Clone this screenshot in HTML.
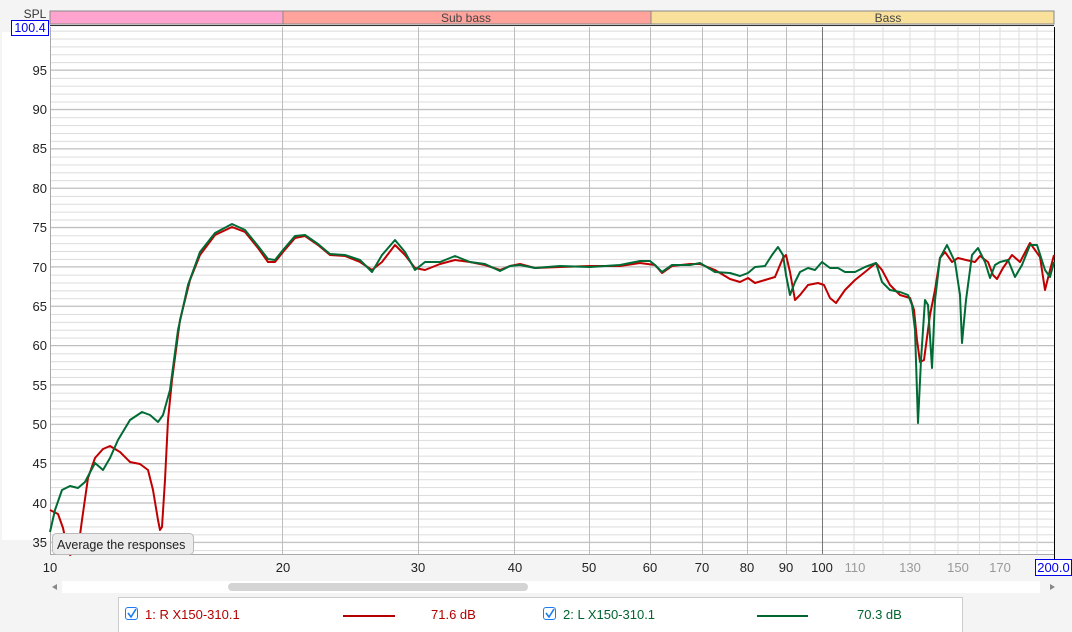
<!DOCTYPE html>
<html><head><meta charset="utf-8"><style>
html,body{margin:0;padding:0;background:#f4f4f4;width:1072px;height:632px;overflow:hidden;font-family:"Liberation Sans",sans-serif}
svg{display:block}
</style></head><body>
<svg width="1072" height="632" xmlns="http://www.w3.org/2000/svg" font-family="Liberation Sans, sans-serif">
<defs>
<pattern id="hm" x="0" y="70" width="10" height="7.87" patternUnits="userSpaceOnUse">
<line x1="0" y1="0.5" x2="10" y2="0.5" stroke="#dcdcdc" stroke-width="1"/>
</pattern>
</defs>
<rect x="0" y="0" width="1072" height="632" fill="#f4f4f4"/>
<rect x="2" y="32" width="48" height="508" fill="#fff"/>
<!-- bands -->
<rect x="50" y="11" width="233" height="13" fill="#ffa3cf" stroke="#888" stroke-width="1"/>
<rect x="283" y="11" width="368" height="13" fill="#ffa39c" stroke="#888" stroke-width="1"/>
<rect x="651" y="11" width="403" height="13" fill="#f9e19b" stroke="#888" stroke-width="1"/>
<text x="466" y="22" font-size="12" fill="#444" text-anchor="middle">Sub bass</text>
<text x="888" y="22" font-size="12" fill="#444" text-anchor="middle">Bass</text>
<text x="35" y="18" font-size="12" fill="#333" text-anchor="middle">SPL</text>
<!-- plot -->
<rect x="50" y="27" width="1004" height="527" fill="#fff"/>
<rect x="50" y="27" width="1004" height="527" fill="url(#hm)"/>
<g stroke="#bdbdbd" stroke-width="1">
<line x1="50" x2="1054" y1="70" y2="70"/><line x1="50" x2="1054" y1="109.4" y2="109.4"/><line x1="50" x2="1054" y1="148.7" y2="148.7"/><line x1="50" x2="1054" y1="188.1" y2="188.1"/><line x1="50" x2="1054" y1="227.4" y2="227.4"/><line x1="50" x2="1054" y1="266.8" y2="266.8"/><line x1="50" x2="1054" y1="306.1" y2="306.1"/><line x1="50" x2="1054" y1="345.5" y2="345.5"/><line x1="50" x2="1054" y1="384.8" y2="384.8"/><line x1="50" x2="1054" y1="424.2" y2="424.2"/><line x1="50" x2="1054" y1="463.5" y2="463.5"/><line x1="50" x2="1054" y1="502.9" y2="502.9"/><line x1="50" x2="1054" y1="542.2" y2="542.2"/>
</g>
<g stroke="#bdbdbd" stroke-width="1">
<line x1="282.5" x2="282.5" y1="27" y2="554"/><line x1="418.5" x2="418.5" y1="27" y2="554"/><line x1="514.5" x2="514.5" y1="27" y2="554"/><line x1="589.5" x2="589.5" y1="27" y2="554"/><line x1="650.5" x2="650.5" y1="27" y2="554"/><line x1="702.5" x2="702.5" y1="27" y2="554"/><line x1="747.5" x2="747.5" y1="27" y2="554"/><line x1="786.5" x2="786.5" y1="27" y2="554"/>
</g>
<line x1="822.5" x2="822.5" y1="27" y2="554" stroke="#777"/>
<g stroke="#dedede" stroke-width="1">
<line x1="854" x2="854" y1="27" y2="554"/><line x1="883" x2="883" y1="27" y2="554"/><line x1="910" x2="910" y1="27" y2="554"/><line x1="935" x2="935" y1="27" y2="554"/><line x1="958" x2="958" y1="27" y2="554"/><line x1="979.5" x2="979.5" y1="27" y2="554"/><line x1="1000" x2="1000" y1="27" y2="554"/><line x1="1019" x2="1019" y1="27" y2="554"/><line x1="1037" x2="1037" y1="27" y2="554"/>
</g>
<line x1="50" x2="1054" y1="25.5" y2="25.5" stroke="#333"/>
<line x1="50.5" x2="50.5" y1="27" y2="555" stroke="#aaa"/>
<line x1="50" x2="1054" y1="554.5" y2="554.5" stroke="#aaa"/>
<line x1="1054.5" x2="1054.5" y1="27" y2="560" stroke="#000"/>
<!-- curves -->
<polyline fill="none" stroke="#c00000" stroke-width="2" stroke-linejoin="round" points="50,510 58,514 63,528 66,542 70,555 78,550 82,520 88,478 95,458 103,449 110,446 120,452 130,462 140,464 148,470 153,490 158,520 160,530 162,527 165,480 168,420 172,380 180,320 190,280 200,255 215,235 232,227 245,232 258,248 268,262 275,262 283,252 295,238 305,236 318,245 330,255 345,256 360,262 372,270 382,262 395,245 405,255 415,268 425,270 440,264 455,260 470,262 485,265 500,270 510,266 520,264 535,268 560,267 590,266 620,266 640,263 655,265 662,273 672,266 690,264 700,264 715,270 730,279 740,282 748,278 755,283 765,280 775,277 780,265 783,258 786,255 790,272 795,300 800,295 808,285 818,283 824,285 830,298 836,303 845,290 855,280 865,272 876,263 882,270 890,285 900,295 910,298 914,310 917,340 920,362 924,360 930,315 935,290 940,258 945,252 952,262 958,258 966,260 975,262 980,256 988,262 993,275 997,279 1003,268 1012,255 1020,262 1030,243 1040,257 1045,290 1050,270 1054,255"/>
<polyline fill="none" stroke="#006b35" stroke-width="2" stroke-linejoin="round" points="50,532 55,510 62,490 70,486 78,488 85,482 95,463 103,470 110,458 118,440 130,420 142,412 150,415 158,422 163,415 170,390 178,330 188,285 200,252 215,233 232,224 245,230 258,246 268,259 275,260 283,250 295,236 305,235 318,244 330,254 345,255 360,260 372,272 382,255 395,240 405,252 415,270 425,262 440,262 455,256 470,262 485,264 500,271 510,266 520,265 535,268 560,266 590,267 620,265 640,261 650,261 655,265 662,272 672,265 690,265 700,263 715,272 730,273 740,276 748,273 755,267 765,266 772,255 778,247 783,255 786,275 790,295 795,282 800,272 808,268 815,270 822,262 830,268 838,268 845,272 855,272 865,267 876,263 882,282 890,290 900,292 908,295 912,305 915,330 918,423 921,360 925,300 928,305 932,368 935,300 940,258 947,245 955,262 960,295 962,343 966,300 972,255 978,248 985,262 990,278 995,265 1000,262 1008,260 1015,277 1022,265 1030,245 1037,245 1045,270 1050,277 1054,262"/>
<!-- button -->
<rect x="52.5" y="533.5" width="141" height="21" rx="4" fill="#ececec" stroke="#bbb"/>
<text x="57" y="549" font-size="12.5" fill="#222">Average the responses</text>
<!-- y labels -->
<g font-size="13" fill="#222" text-anchor="end">
<text x="47" y="75">95</text><text x="47" y="114">90</text><text x="47" y="153">85</text><text x="47" y="193">80</text><text x="47" y="232">75</text><text x="47" y="272">70</text><text x="47" y="311">65</text><text x="47" y="350">60</text><text x="47" y="390">55</text><text x="47" y="429">50</text><text x="47" y="468">45</text><text x="47" y="508">40</text><text x="47" y="547">35</text>
</g>
<rect x="11.5" y="20.5" width="37" height="15" fill="#fff" stroke="#0000ee"/>
<text x="30" y="32" font-size="12.5" fill="#0000ee" text-anchor="middle">100.4</text>
<!-- x labels -->
<g font-size="13" fill="#222" text-anchor="middle">
<text x="50" y="572">10</text><text x="283" y="572">20</text><text x="418" y="572">30</text><text x="515" y="572">40</text><text x="589" y="572">50</text><text x="650" y="572">60</text><text x="702" y="572">70</text><text x="747" y="572">80</text><text x="786" y="572">90</text><text x="822" y="572">100</text>
</g>
<g font-size="13" fill="#999" text-anchor="middle">
<text x="855" y="572">110</text><text x="910" y="572">130</text><text x="958" y="572">150</text><text x="1000" y="572">170</text>
</g>
<rect x="1035.5" y="559.5" width="36" height="16" fill="#fff" stroke="#0000ee"/>
<text x="1053.5" y="572" font-size="13" fill="#0000ee" text-anchor="middle">200.0</text>
<!-- scrollbar -->
<rect x="62" y="581" width="978" height="12" fill="#fff"/>
<path d="M52,587 L57,584 L57,590 Z" fill="#888"/>
<path d="M1050,584 L1055,587 L1050,590 Z" fill="#888"/>
<rect x="228" y="583" width="300" height="8" rx="4" fill="#d4d4d4"/>
<!-- legend -->
<rect x="118.5" y="597.5" width="844" height="40" fill="#fff" stroke="#ccc"/>
<rect x="125.5" y="607.5" width="12" height="12" rx="2.5" fill="#fff" stroke="#1a7cf0"/>
<path d="M128,613 L131,617 L136,609" fill="none" stroke="#1a7cf0" stroke-width="1.6"/>
<text x="145" y="619" font-size="13" fill="#b40000">1: R X150-310.1</text>
<line x1="343" x2="395" y1="616" y2="616" stroke="#b40000" stroke-width="2"/>
<text x="431" y="619" font-size="13" fill="#b40000">71.6 dB</text>
<rect x="543.5" y="607.5" width="12" height="12" rx="2.5" fill="#fff" stroke="#1a7cf0"/>
<path d="M546,613 L549,617 L554,609" fill="none" stroke="#1a7cf0" stroke-width="1.6"/>
<text x="563" y="619" font-size="13" fill="#00642f">2: L X150-310.1</text>
<line x1="757" x2="808" y1="616" y2="616" stroke="#00642f" stroke-width="2"/>
<text x="857" y="619" font-size="13" fill="#00642f">70.3 dB</text>
</svg>
</body></html>
